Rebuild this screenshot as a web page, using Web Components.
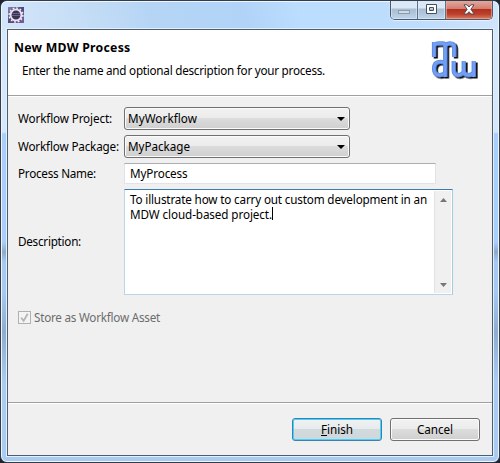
<!DOCTYPE html>
<html lang="en"><head><meta charset="utf-8"><title>New MDW Process</title>
<style>
html,body{margin:0;width:500px;height:463px;overflow:hidden;background:#20242e}
body{font:11.7px/15px "Noto Sans","Open Sans",sans-serif;color:#000}
</style></head><body>
<wizard-window>
  <wizard-banner slot="banner">
    <fit-text slot="title" w="116.5" style="font-weight:700;font-size:12.3px">New MDW Process</fit-text>
    <fit-text slot="message" w="303">Enter the name and optional description for your process.</fit-text>
  </wizard-banner>
  <wizard-form slot="form">
    <fit-text w="94">Workflow Project:</fit-text><combo-box><fit-text w="69">MyWorkflow</fit-text></combo-box>
    <fit-text w="101">Workflow Package:</fit-text><combo-box><fit-text w="62">MyPackage</fit-text></combo-box>
    <fit-text w="78">Process Name:</fit-text><text-field><fit-text w="57.5">MyProcess</fit-text></text-field>
    <fit-text w="63">Description:</fit-text><text-area><fit-text w="297">To illustrate how to carry out custom development in an</fit-text><fit-text w="142">MDW cloud-based project.</fit-text></text-area>
  </wizard-form>
  <check-box slot="option"><fit-text w="126">Store as Workflow Asset</fit-text></check-box>
  <push-button slot="actions" class="primary"><fit-text w="32"><u>F</u>inish</fit-text></push-button>
  <push-button slot="actions"><fit-text w="36">Cancel</fit-text></push-button>
</wizard-window>
<script>
const define=(name,html,setup)=>customElements.define(name,class extends HTMLElement{
  constructor(){super();this.attachShadow({mode:'open'}).innerHTML=html}
  connectedCallback(){if(setup)setup(this)}
});
// Spreads letters so that a label has the width given in its w attribute.
define('fit-text',`<style>:host{display:block;white-space:nowrap;width:max-content;font-size:11.7px;line-height:15px}</style><slot></slot>`,el=>{
  const want=+el.getAttribute('w'),n=el.textContent.length;
  el.style.letterSpacing='0px';
  const r=document.createRange();r.selectNodeContents(el);
  const have=r.getBoundingClientRect().width;
  if(have)el.style.letterSpacing=((want-have)/n)+'px';
});
define('app-icon',`<style>:host{display:block;width:16px;height:16px}svg{display:block}</style>
<svg width="16" height="16"><defs><linearGradient id="a" x2="1" y2="1"><stop stop-color="#8b82b4"/><stop offset=".5" stop-color="#54467c"/><stop offset="1" stop-color="#7b5ea6"/></linearGradient></defs>
<rect width="16" height="16" fill="url(#a)"/><circle cx="8" cy="8" r="6.9" fill="none" stroke="#f2f0ee" stroke-width="1.5" stroke-dasharray="1.8 1.813"/><circle cx="8" cy="8" r="5.4" fill="#3a325c" stroke="#e8e5e6" stroke-width="1.9"/><path d="M4.2 6.5h7.6M3.9 8.5h8.2" stroke="#69648a" stroke-width="1"/></svg>`);
define('mdw-logo',`<style>:host{display:block;width:51px;height:41px}svg{display:block;overflow:visible}</style>
<svg width="50" height="41"><defs><filter id="s" x="-20%" y="-20%" width="150%" height="150%"><feDropShadow dx="1.8" dy="1.5" stdDeviation=".7" flood-color="#000" flood-opacity=".95"/></filter><g id="w"><path d="M3 16.5V1.3M3 4.5Q5 2.8 8 2.8H11.5Q14.2 2.8 14.2 6V36.3M14.2 5Q16 2.8 19 2.8Q23.2 2.8 23.2 7V16.5"/><path d="M14.2 22.5Q12 21 9 21.2Q3 21.4 3 28Q3 34.5 8.5 34.5Q12 34.5 14.2 32"/><path d="M22.7 20.3V30Q22.7 34.5 27 34.5Q30.3 34.5 32.7 31.5V20.3M32.7 31Q33.4 34.5 37.3 34.5Q40 34.5 42.7 32V20.3M42.7 31V36.3"/></g></defs>
<g fill="none" stroke-linejoin="round" transform="translate(0 .6)"><use href="#w" filter="url(#s)" stroke="#5b88dd" stroke-width="4.2"/><use href="#w" stroke="#719ff5" stroke-width="2.6"/></g></svg>`);
define('caption-buttons',`<style>:host{display:flex;box-sizing:border-box;width:103px;height:20px;border:1px solid #4a596c;border-top:0;border-radius:0 0 5px 5px;overflow:hidden;box-shadow:0 1px 0 #eef6ffb0,0 0 2px #fff8}
span{display:flex;align-items:center;justify-content:center;border-right:1px solid #5e7087;box-shadow:inset 0 0 0 1px #e6effa88;background:linear-gradient(#dae8f7 0 40%,#a9bdd3 50%,#bed5ec);width:27px}
span:nth-child(2){width:26px}span:last-child{flex:1;border:0;box-shadow:inset 0 0 0 1px #f2b2a499;background:linear-gradient(#e6ada2,#d27f72 45%,#b42f1e 50%,#bb412c 75%,#dc7d60)}svg{display:block}</style>
<span><svg width="14" height="13"><rect x="1.5" y="7.5" width="11" height="3" fill="#d3dae2" stroke="#8c9bad"/></svg></span>
<span><svg width="13" height="11"><path fill="#fff" stroke="#44505f" fill-rule="evenodd" d="M1.5.5h10v9h-10zM4.5 3.5h4v3h-4z"/></svg></span>
<span><svg width="14" height="12"><path d="M2 .8h3L7 3 9 .8h3L8.9 5.3 12.2 10H9L7 7.7 5 10H1.8L5.1 5.3z" fill="#fff" stroke="#55484f"/></svg></span>`);
define('wizard-window',`<style>
:host{display:block;box-sizing:border-box;width:500px;height:463px;border:1px solid #343b49;border-radius:7px;overflow:hidden;background:linear-gradient(#bcdcf9,#b4d6fa 30%,#aecaea)}
.frame{box-sizing:border-box;width:498px;height:461px;border:1px solid #edf6ff;border-radius:6px;padding:0 5px 5px;background:linear-gradient(75deg,#d3e5f9,#c6def6 16%,#b6d5f5 30%,#b0d3f7 49%,#bbddff 60%,#bfddfc 85%,#d2e5fa) 0 0/100% 28px no-repeat,linear-gradient(#d5e7fa 0 130px,#a9cefb 132px 240px,#8fa9c8 250px,#a5c9f3 260px 290px,#8faccf 330px,#a9cbf2 380px)}
header{height:26px;display:flex;justify-content:space-between}
app-icon{margin:5px 0 0 1px}caption-buttons{margin-top:-2px}
main{box-sizing:border-box;width:486px;height:427px;border:1px solid #4e5d6d;outline:1px solid #e2f0fd;display:flex;flex-direction:column;background:#f0f0f0;margin-top:1px}
.space{flex:1}footer{display:flex;gap:8px;justify-content:flex-end;box-sizing:border-box;height:53px;border-top:1px solid #a0a0a0;box-shadow:inset 0 1px #fff;padding:15px 12px 0}
</style><div class="frame"><header><app-icon></app-icon><caption-buttons></caption-buttons></header><main><slot name="banner"></slot><slot name="form"></slot><slot name="option"></slot><div class="space"></div><footer><slot name="actions"></slot></footer></main></div>`);
define('wizard-banner',`<style>:host{display:flex;justify-content:space-between;box-sizing:border-box;height:66px;background:#fff;border-bottom:1px solid #a0a0a0;box-shadow:0 1px #fff;padding:10px 10px 0 6px}
.copy{display:flex;flex-direction:column;gap:8px}::slotted([slot=message]){margin-left:8px}</style><div class="copy"><slot name="title"></slot><slot name="message"></slot></div><mdw-logo></mdw-logo>`);
define('wizard-form',`<style>:host{display:grid;grid-template-columns:101px 329px;grid-template-rows:23px 23px 21px 106px;gap:5px;align-items:center;padding:11px 0 0 10px}::slotted(fit-text){padding-bottom:1px}</style><slot></slot>`);
define('combo-box',`<style>:host{display:flex;align-items:center;justify-content:space-between;box-sizing:border-box;width:226px;height:23px;border:1px solid #707070;border-radius:3px;padding:0 4px 0 3px;box-shadow:inset 0 0 0 1px #fbfbfb;background:linear-gradient(#f2f2f2,#ebebeb 49%,#dcdcdc 50%,#cfcfcf)}::slotted(fit-text){padding-bottom:1px}svg{display:block}</style><slot></slot><svg width="8" height="4"><path d="M0 0h8L4 4z"/></svg>`);
define('text-field',`<style>:host{display:flex;align-items:center;box-sizing:border-box;width:312px;height:21px;border:1px solid #e2e3ea;border-top-color:#abadb3;background:#fff;padding-left:5px}</style><slot></slot>`);
define('text-area',`<style>:host{display:flex;box-sizing:border-box;width:329px;height:106px;border:1px solid #b5d6ee;border-top-color:#3d7bad;border-right-color:#a4c9e3;border-radius:1px;background:#fff;padding:1px}
.text{flex:1;padding:1px 0 0 4px;position:relative}.caret{position:absolute;left:146px;top:16px;width:1px;height:13px;background:#000}
.bar{width:17px;box-sizing:border-box;background:#f0f0f0;border-left:1px solid #e3e3e3;display:flex;flex-direction:column;justify-content:space-between;align-items:center;padding:7px 0 6px}svg{display:block}</style>
<div class="text"><slot></slot><i class="caret"></i></div><div class="bar"><svg width="7" height="4"><path d="M0 4h7L3.5 0z" fill="#777"/></svg><svg width="7" height="4"><path d="M0 0h7L3.5 4z" fill="#777"/></svg></div>`);
define('check-box',`<style>:host{display:flex;gap:3px;align-items:center;margin:15px 0 0 10px;height:15px;color:#6d6d6d}svg{display:block}</style><svg width="13" height="13"><rect x=".5" y=".5" width="12" height="12" fill="#f4f4f4" stroke="#b1b1b1"/><path d="M3.2 6.8L5.6 9.9 9.7 2.8" fill="none" stroke="#b5b5b5" stroke-width="1.8"/></svg><slot></slot>`);
define('push-button',`<style>:host{display:flex;align-items:center;justify-content:center;box-sizing:border-box;width:90px;height:23px;border:1px solid #707070;border-radius:3px;box-shadow:inset 0 0 0 1px #fbfbfb;background:linear-gradient(#f2f2f2,#ebebeb 49%,#dddddd 50%,#cfcfcf)}
:host(.primary){border-color:#3c7fb1;box-shadow:inset 0 0 0 1px #43d3fb;background:linear-gradient(#f0f2f3,#e6ebed 49%,#d2dadd 50%,#d1d7dc)}</style><slot></slot>`);
</script></body></html>
